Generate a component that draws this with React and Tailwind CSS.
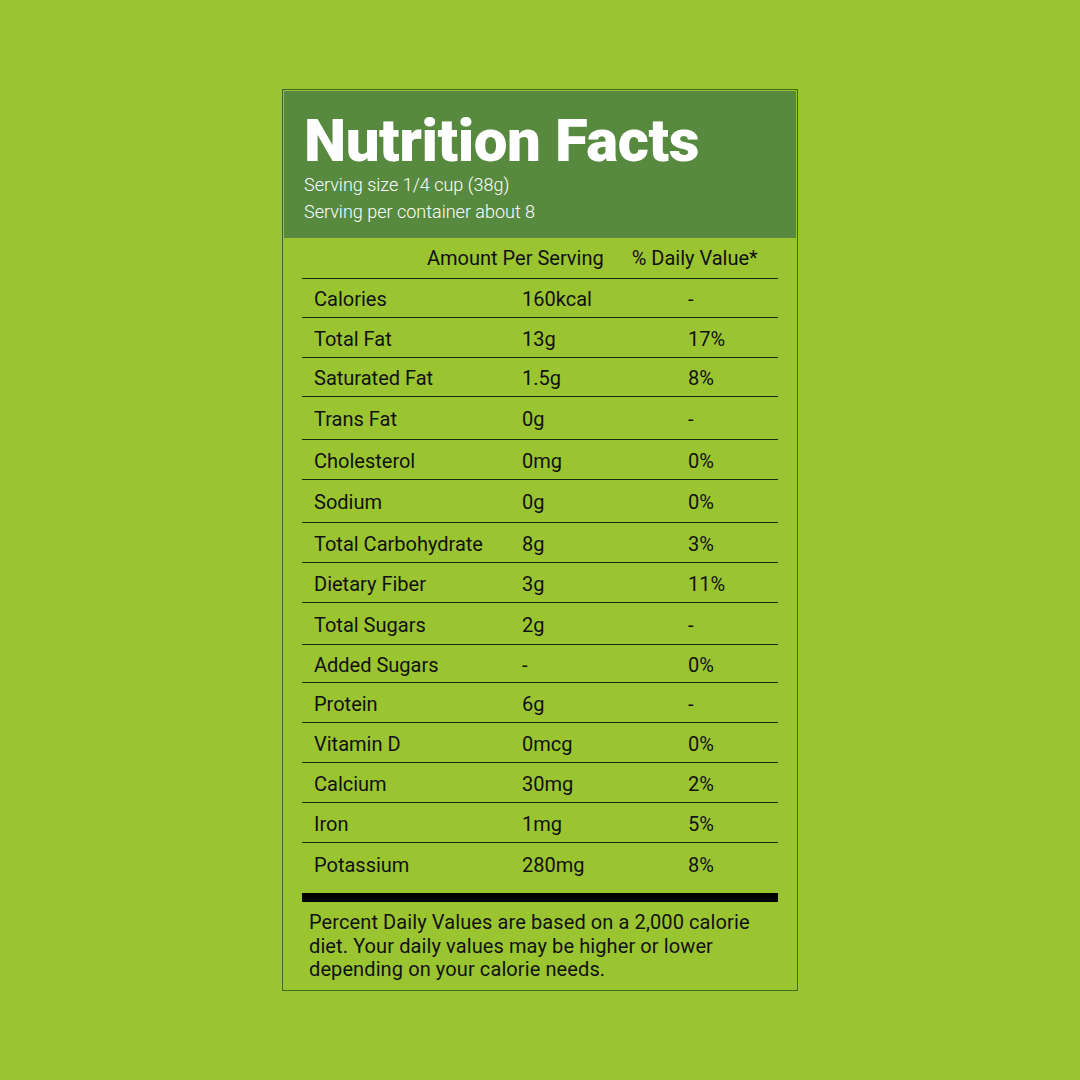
import React from "react";

const rows = [
  ["Calories", "160kcal", "-", "h-[39px]"],
  ["Total Fat", "13g", "17%", "h-[40px]"],
  ["Saturated Fat", "1.5g", "8%", "h-[39px]"],
  ["Trans Fat", "0g", "-", "h-[43px]"],
  ["Cholesterol", "0mg", "0%", "h-[40px]"],
  ["Sodium", "0g", "0%", "h-[43px]"],
  ["Total Carbohydrate", "8g", "3%", "h-[40px]"],
  ["Dietary Fiber", "3g", "11%", "h-[40px]"],
  ["Total Sugars", "2g", "-", "h-[42px]"],
  ["Added Sugars", "-", "0%", "h-[38px]"],
  ["Protein", "6g", "-", "h-[40px]"],
  ["Vitamin D", "0mcg", "0%", "h-[40px]"],
  ["Calcium", "30mg", "2%", "h-[40px]"],
  ["Iron", "1mg", "5%", "h-[40px]"],
];

export default function App() {
  return (
    <div
      className="w-[1080px] h-[1080px] bg-[#9bc431] flex justify-center pt-[89px]"
      style={{ fontFamily: "Roboto, 'Liberation Sans', sans-serif" }}
    >
      <div className="w-[516px] h-[902px] border border-[#3f6b1f] p-[1px] flex flex-col">
        <div className="bg-[#578a3f] h-[147px] pl-[20px] pt-[17px] text-white">
          <div className="text-[60px] font-black leading-[66px] tracking-[-0.45px]">Nutrition Facts</div>
          <div className="text-[18px] font-light leading-[27px] mt-[-3px]">Serving size 1/4 cup (38g)</div>
          <div className="text-[18px] font-light leading-[27px]">Serving per container about 8</div>
        </div>
        <div className="px-[18px] text-[#111]">
          <div className="h-[41px] border-b border-[#1b2a0b] flex items-center text-[20px]">
            <span className="ml-[125px]">Amount Per Serving</span>
            <span className="ml-[28px]">% Daily Value*</span>
          </div>
          {rows.map(([n, v, d, h]) => (
            <div key={n} className={`${h} border-b border-[#1b2a0b] flex items-center text-[20px] pt-[2px]`}>
              <span className="w-[220px] pl-[12px]">{n}</span>
              <span className="w-[166px]">{v}</span>
              <span>{d}</span>
            </div>
          ))}
          <div className="h-[44px] flex items-center text-[20px]">
            <span className="w-[220px] pl-[12px]">Potassium</span>
            <span className="w-[166px]">280mg</span>
            <span>8%</span>
          </div>
          <div className="h-[9px] bg-black mt-[6px]"></div>
          <div className="pl-[7px] pt-[9px] pr-[20px] text-[20px] leading-[23.5px] tracking-[0.1px]">
            Percent Daily Values are based on a 2,000 calorie diet. Your daily values may be higher or lower depending on your calorie needs.
          </div>
        </div>
      </div>
    </div>
  );
}
